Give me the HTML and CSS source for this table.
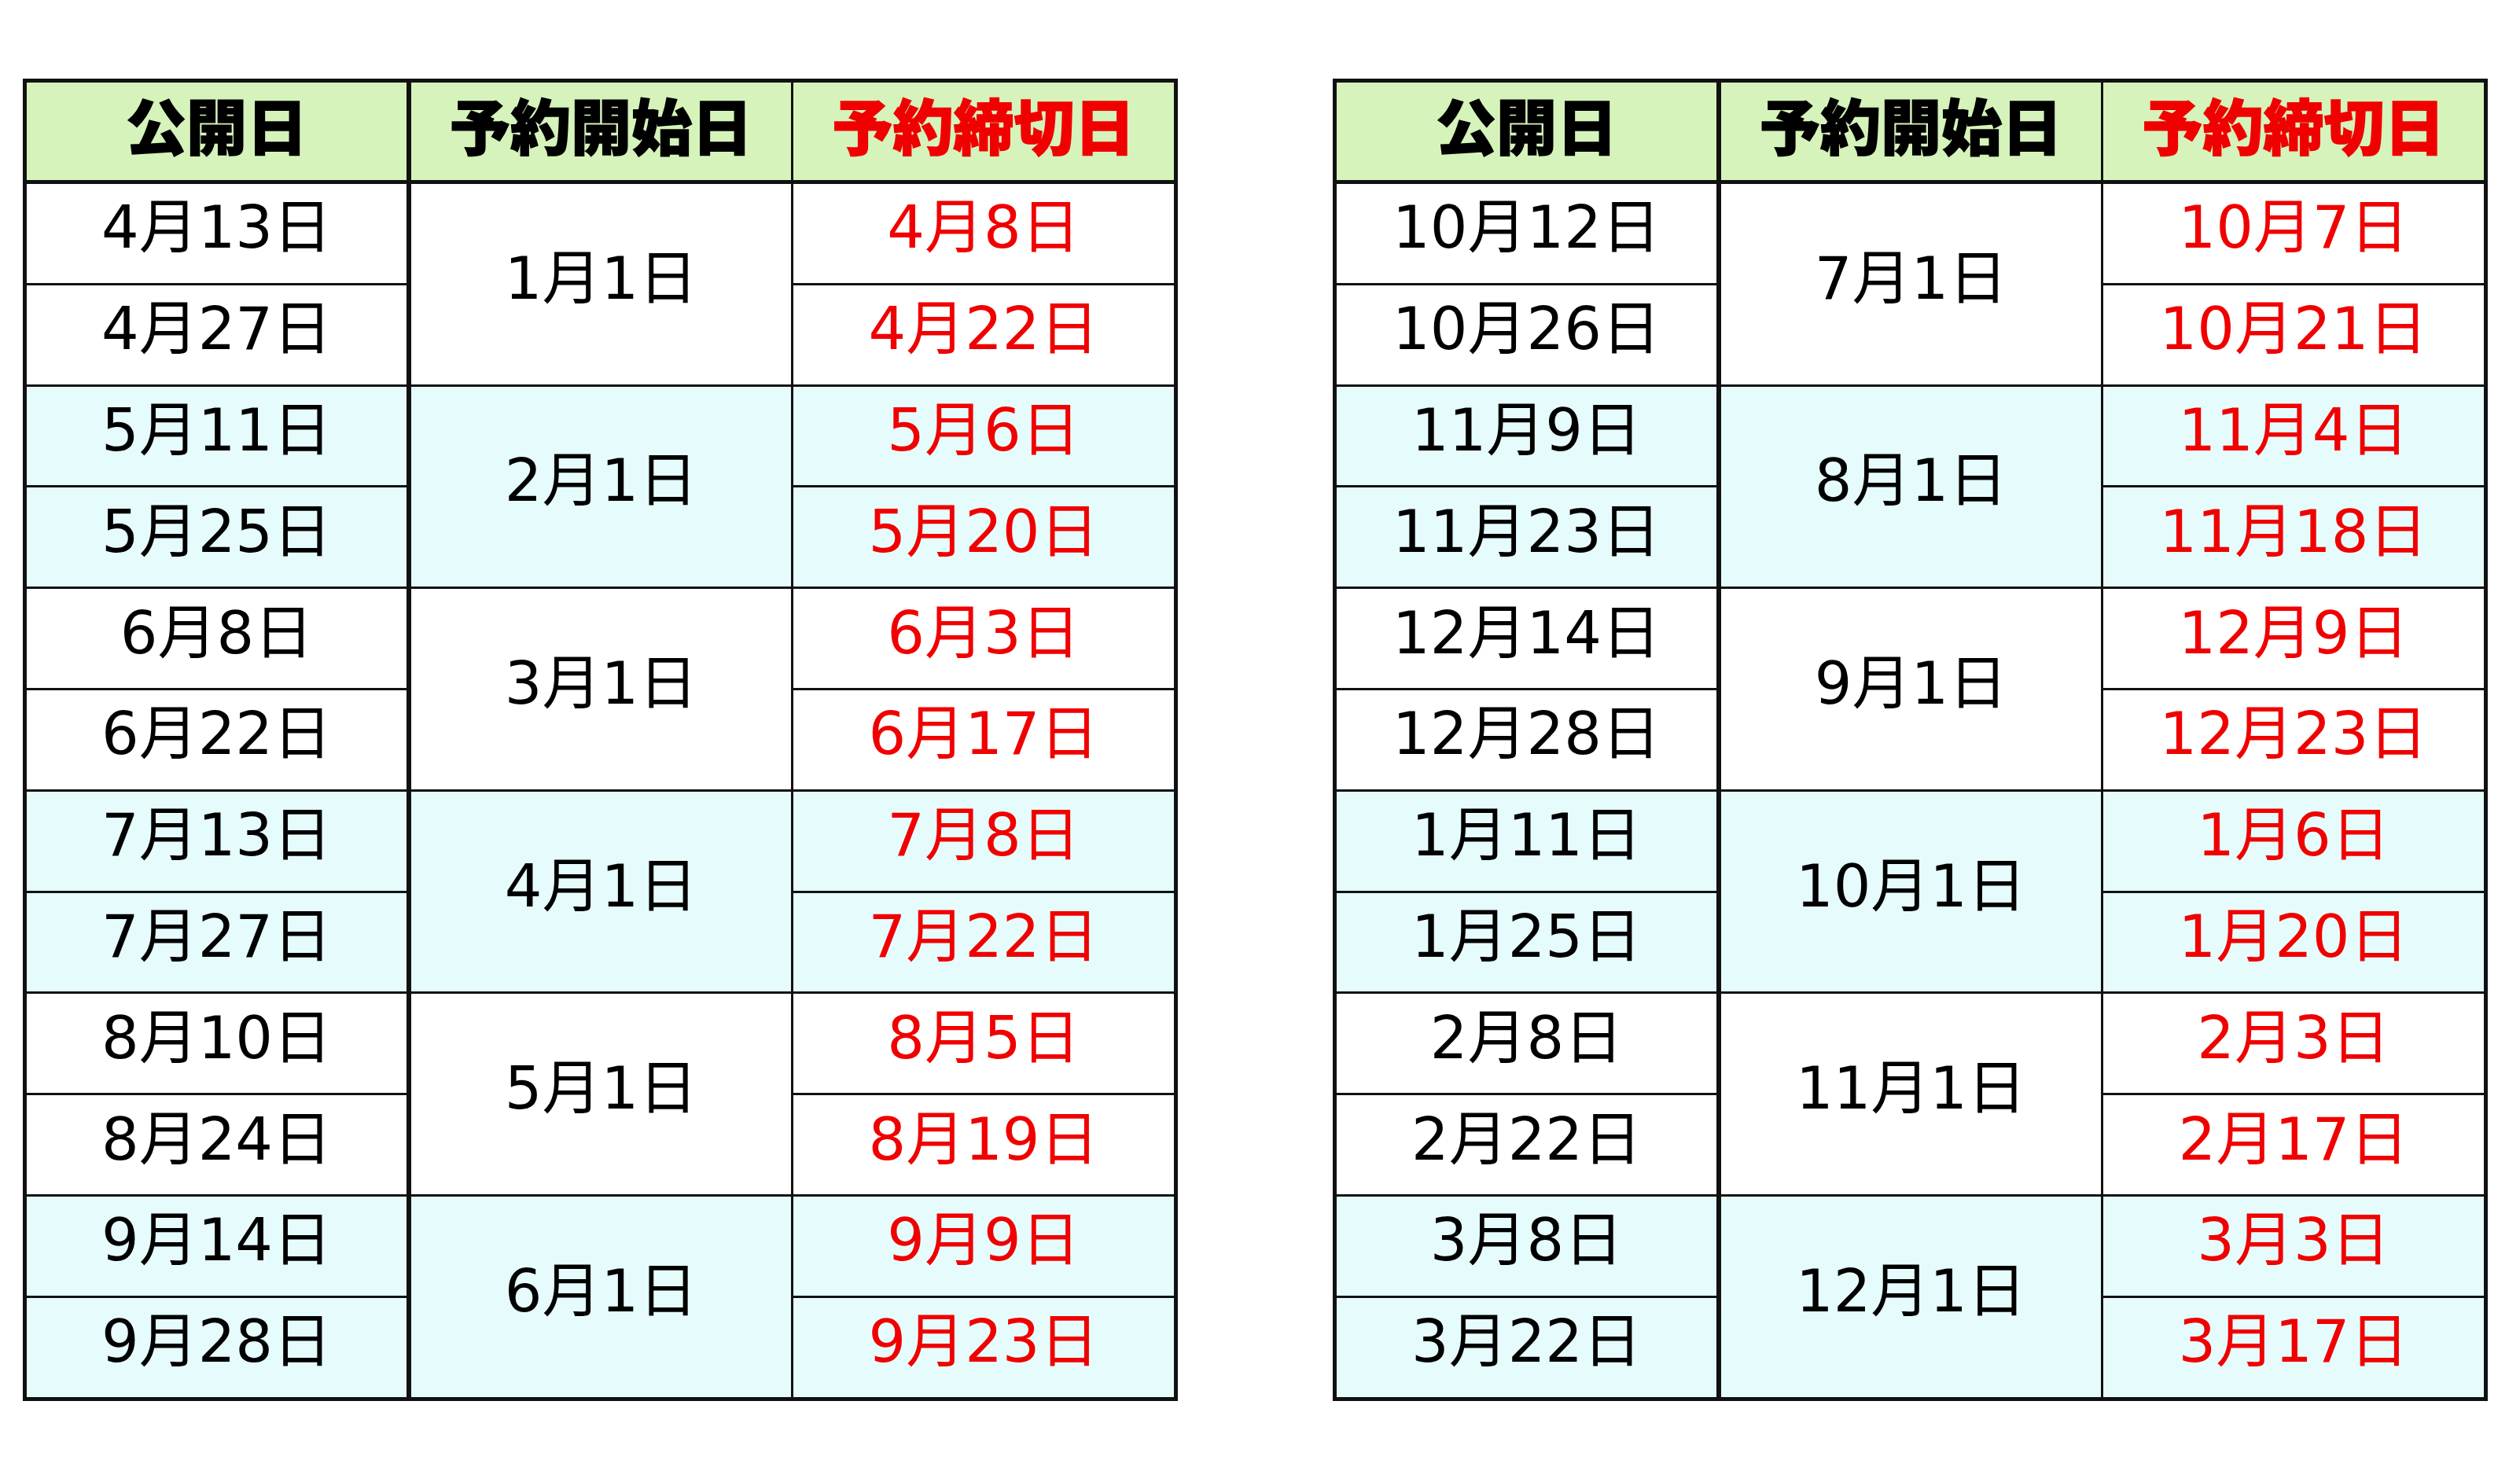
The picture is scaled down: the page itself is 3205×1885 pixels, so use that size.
FILE: index.html
```html
<!DOCTYPE html>
<html lang="ja">
<head>
<meta charset="utf-8">
<title>予約スケジュール</title>
<link rel="stylesheet" href="styles.css">
</head>
<body>
<div class="page">
  <div class="tbl">
    <div class="col c1">
      <div class="head">公開日</div>
      <div class="cell">4月13日</div>
      <div class="cell">4月27日</div>
      <div class="cell alt">5月11日</div>
      <div class="cell alt">5月25日</div>
      <div class="cell">6月8日</div>
      <div class="cell">6月22日</div>
      <div class="cell alt">7月13日</div>
      <div class="cell alt">7月27日</div>
      <div class="cell">8月10日</div>
      <div class="cell">8月24日</div>
      <div class="cell alt">9月14日</div>
      <div class="cell alt">9月28日</div>
    </div>
    <div class="col c2">
      <div class="head">予約開始日</div>
      <div class="cell big">1月1日</div>
      <div class="cell big alt">2月1日</div>
      <div class="cell big">3月1日</div>
      <div class="cell big alt">4月1日</div>
      <div class="cell big">5月1日</div>
      <div class="cell big alt">6月1日</div>
    </div>
    <div class="col c3">
      <div class="head red">予約締切日</div>
      <div class="cell red">4月8日</div>
      <div class="cell red">4月22日</div>
      <div class="cell red alt">5月6日</div>
      <div class="cell red alt">5月20日</div>
      <div class="cell red">6月3日</div>
      <div class="cell red">6月17日</div>
      <div class="cell red alt">7月8日</div>
      <div class="cell red alt">7月22日</div>
      <div class="cell red">8月5日</div>
      <div class="cell red">8月19日</div>
      <div class="cell red alt">9月9日</div>
      <div class="cell red alt">9月23日</div>
    </div>
  </div>

  <div class="tbl">
    <div class="col c1">
      <div class="head">公開日</div>
      <div class="cell">10月12日</div>
      <div class="cell">10月26日</div>
      <div class="cell alt">11月9日</div>
      <div class="cell alt">11月23日</div>
      <div class="cell">12月14日</div>
      <div class="cell">12月28日</div>
      <div class="cell alt">1月11日</div>
      <div class="cell alt">1月25日</div>
      <div class="cell">2月8日</div>
      <div class="cell">2月22日</div>
      <div class="cell alt">3月8日</div>
      <div class="cell alt">3月22日</div>
    </div>
    <div class="col c2">
      <div class="head">予約開始日</div>
      <div class="cell big">7月1日</div>
      <div class="cell big alt">8月1日</div>
      <div class="cell big">9月1日</div>
      <div class="cell big alt">10月1日</div>
      <div class="cell big">11月1日</div>
      <div class="cell big alt">12月1日</div>
    </div>
    <div class="col c3">
      <div class="head red">予約締切日</div>
      <div class="cell red">10月7日</div>
      <div class="cell red">10月21日</div>
      <div class="cell red alt">11月4日</div>
      <div class="cell red alt">11月18日</div>
      <div class="cell red">12月9日</div>
      <div class="cell red">12月23日</div>
      <div class="cell red alt">1月6日</div>
      <div class="cell red alt">1月20日</div>
      <div class="cell red">2月3日</div>
      <div class="cell red">2月17日</div>
      <div class="cell red alt">3月3日</div>
      <div class="cell red alt">3月17日</div>
    </div>
  </div>
</div>
</body>
</html>
```

FILE: styles.css
```css
html, body {
  margin: 0;
  padding: 0;
  background: #ffffff;
}

.page {
  display: flex;
  align-items: flex-start;
  gap: 197px;
  padding-top: 100px;
  padding-left: 29px;
}

.tbl {
  display: flex;
  border: 5px solid #111;
  background: #ffffff;
}

.col {
  display: flex;
  flex-direction: column;
  width: 483px;
}

.c2 {
  border-left: 6px solid #111;
}

.c3 {
  width: 484px;
  border-left: 3px solid #111;
}

.head {
  height: 129px;
  border-bottom: 5px solid #111;
  background: #d5f3ba;
  display: flex;
  align-items: center;
  justify-content: center;
  box-sizing: border-box;
  padding-bottom: 20px;
  font-family: "Noto Sans CJK JP", sans-serif;
  font-weight: 900;
  font-size: 77px;
  line-height: 1;
  color: #000;
  -webkit-text-stroke: 1.5px currentColor;
}

.cell {
  height: 125.8px;
  display: flex;
  align-items: center;
  justify-content: center;
  box-sizing: border-box;
  padding-bottom: 14px;
  font-family: "DejaVu Sans", "Noto Sans CJK JP", sans-serif;
  font-size: 75px;
  line-height: 1;
  color: #000;
  background: #ffffff;
}

.cell + .cell {
  border-top: 3px solid #111;
  height: 128.8px;
}

.cell.big {
  height: 254.6px;
}

.cell.big + .cell.big {
  height: 257.6px;
}

.cell.alt {
  background: #e6fcfc;
}

.red {
  color: #f00000;
}
```
